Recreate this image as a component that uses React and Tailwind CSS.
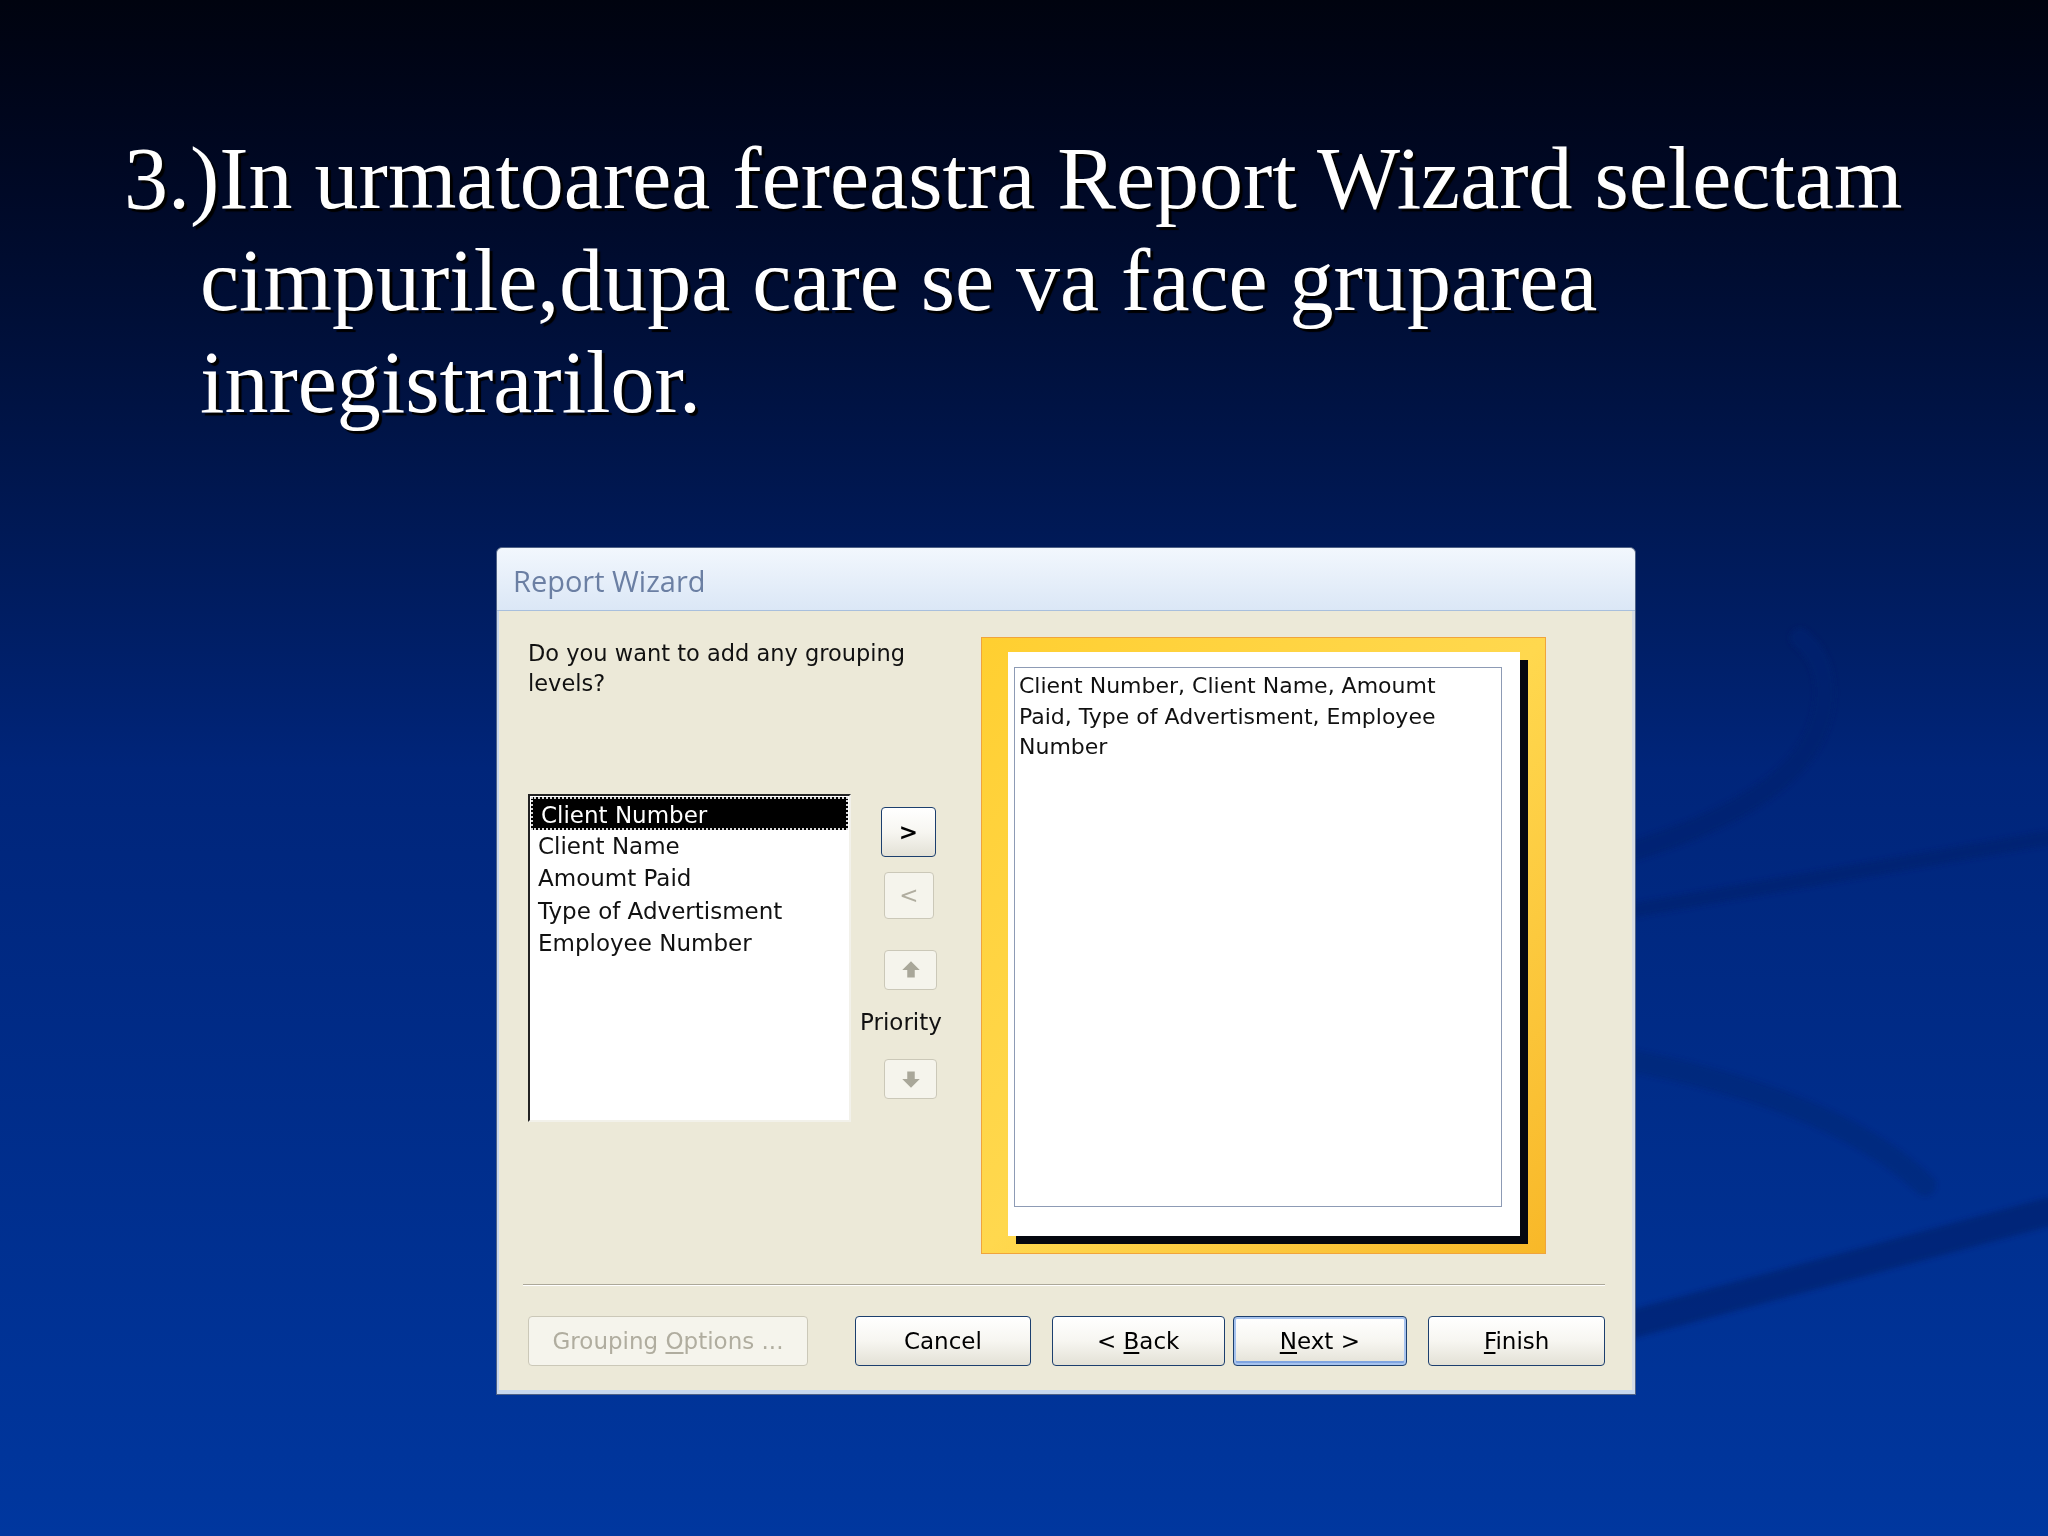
import clsx from "clsx";

const UI = "font-['DejaVu_Sans',Verdana,sans-serif]";

const FIELDS = ["Client Number", "Client Name", "Amoumt Paid", "Type of Advertisment", "Employee Number"];

function XpButton({ children, disabled, primary, className }) {
  return (
    <div
      className={clsx(
        "flex items-center justify-center rounded-[4px] border text-[23px] leading-none",
        UI,
        disabled
          ? "border-[#cbc8b8] bg-[#f5f4ec] text-[#b0ad9f]"
          : "border-[#1c3f6e] bg-linear-to-b from-white via-[#f7f6f1] to-[#e3e1d6] text-black",
        primary && "shadow-[inset_0_0_0_2px_#a7c3ee,inset_0_-2px_0_2px_#7fa4e0]",
        className
      )}
    >
      <span className="whitespace-pre">{children}</span>
    </div>
  );
}

function Arrow({ up }) {
  return (
    <svg width="20" height="20" viewBox="0 0 16 16" className={up ? "" : "rotate-180"}>
      <path d="M8 1 L15 8 L11 8 L11 14 L5 14 L5 8 L1 8 Z" fill="#a9a799" />
    </svg>
  );
}

function Backdrop() {
  return (
    <svg className="absolute inset-0" width="2048" height="1536" viewBox="0 0 2048 1536">
      <defs>
        <filter id="soft" x="-10%" y="-10%" width="120%" height="120%">
          <feGaussianBlur stdDeviation="2.5" />
        </filter>
      </defs>
      <g fill="none" stroke="#00246f" strokeLinecap="round" filter="url(#soft)" opacity="0.7">
        <path d="M1480 885 C1640 860 1780 810 1815 735 C1835 690 1822 655 1800 638" strokeWidth="20" />
        <path d="M1480 937 L2048 838" strokeWidth="14" />
        <path d="M1480 1040 C1680 1058 1840 1105 1925 1185" strokeWidth="22" opacity="0.6" />
        <path d="M1480 1365 L2048 1212" strokeWidth="28" />
      </g>
    </svg>
  );
}

export default function App() {
  return (
    <div className="relative w-[2048px] h-[1536px] overflow-hidden bg-linear-to-b from-[#00030f] via-[#00257a] to-[#00379f]">
      <Backdrop />
      <div className="relative flex flex-col">
        <p className="pt-[128px] pl-[200px] -indent-[76px] font-['Liberation_Serif','Times_New_Roman',serif] text-[88px] leading-[102px] text-white [text-shadow:3px_3px_1px_#000]">
          3.)In urmatoarea fereastra Report Wizard selectam
          <br />
          cimpurile,dupa care se va face gruparea
          <br />
          inregistrarilor.
        </p>

        {/* Report Wizard dialog */}
        <div className="ml-[496px] mt-[113px] flex w-[1140px] h-[848px] flex-col rounded-t-[6px] border border-[#4f6286] bg-[#ece9d8] shadow-[inset_0_-4px_0_#c6d7ef,inset_2px_0_0_#c6d7ef,inset_-3px_0_0_#d6dce6]">
          <div className="flex h-[63px] shrink-0 items-center rounded-t-[6px] border-b border-[#a8bfdd] bg-linear-to-b from-[#f2f7fd] to-[#dbe7f6] pl-[16px] pt-[4px]">
            <span className="font-['Open_Sans','Noto_Sans',sans-serif] text-[29px] text-[#6b7fa3]">Report Wizard</span>
          </div>

          <div className="flex flex-1 flex-col pl-[31px] pr-[30px]">
            <div className="flex h-[643px]">
              {/* left column */}
              <div className="flex w-[323px] flex-col">
                <p className={clsx(UI, "whitespace-nowrap pt-[27px] text-[22.5px] leading-[30px] text-[#111]")}>
                  Do you want to add any grouping
                  <br />
                  levels?
                </p>
                <div className="mt-[96px] h-[328px] w-[323px] border-2 border-t-[#222] border-l-[#222] border-r-[#f2f1ea] border-b-[#f2f1ea] bg-white pt-[1px]">
                  {FIELDS.map((f, i) => (
                    <div
                      key={f}
                      className={clsx(
                        UI,
                        "h-[32.5px] pl-[8px] text-[23px] leading-[32px]",
                        i === 0 ? "mx-[1px] border-2 border-dotted border-[#d8d8d8] bg-black pl-[6px] leading-[29px] text-white" : "text-[#111]"
                      )}
                    >
                      {f}
                    </div>
                  ))}
                </div>
              </div>

              {/* move / priority buttons */}
              <div className="ml-[9px] flex w-[90px] flex-col pt-[196px]">
                <XpButton className="ml-[21px] h-[50px] w-[55px] font-bold">&gt;</XpButton>
                <XpButton disabled className="ml-[24px] mt-[15px] h-[47px] w-[50px]">&lt;</XpButton>
                <XpButton disabled className="ml-[24px] mt-[31px] h-[40px] w-[53px]">
                  <Arrow up />
                </XpButton>
                <span className={clsx(UI, "mt-[17px] text-[23px] leading-[30px] text-[#111]")}>Priority</span>
                <XpButton disabled className="ml-[24px] mt-[22px] h-[40px] w-[53px]">
                  <Arrow />
                </XpButton>
              </div>

              {/* preview frame */}
              <div className="ml-[31px] mt-[26px] h-[617px] w-[565px] border border-[#f0a43c] bg-linear-to-br from-[#ffcf30] via-[#ffd84e] to-[#f8b828] pl-[26px] pt-[14px]">
                <div className="h-[584px] w-[512px] bg-white pl-[6px] pt-[15px] shadow-[8px_8px_0_#05070f]">
                  <div className={clsx(UI, "h-[540px] w-[488px] border border-[#8d9bb5] px-[4px] pt-[3px] text-[22px] leading-[30.5px] text-[#111]")}>
                    Client Number, Client Name, Amoumt
                    <br />
                    Paid, Type of Advertisment, Employee
                    <br />
                    Number
                  </div>
                </div>
              </div>
            </div>

            <div className="mt-[30px] ml-[-5px] w-[1082px] border-t border-b border-t-[#aca899] border-b-white" />

            <div className="mt-[30px] flex">
              <XpButton disabled className="h-[50px] w-[282px]">
                Grouping <span className="underline underline-offset-[3px]">O</span>ptions ...
              </XpButton>
              <XpButton className="ml-[47px] h-[50px] w-[177px]">Cancel</XpButton>
              <XpButton className="ml-[21px] h-[50px] w-[174px]">
                &lt; <span className="underline underline-offset-[3px]">B</span>ack
              </XpButton>
              <XpButton primary className="ml-[8px] h-[50px] w-[176px]">
                <span className="underline underline-offset-[3px]">N</span>ext &gt;
              </XpButton>
              <XpButton className="ml-[21px] h-[50px] w-[178px]">
                <span className="underline underline-offset-[3px]">F</span>inish
              </XpButton>
            </div>
          </div>
        </div>
      </div>
    </div>
  );
}
